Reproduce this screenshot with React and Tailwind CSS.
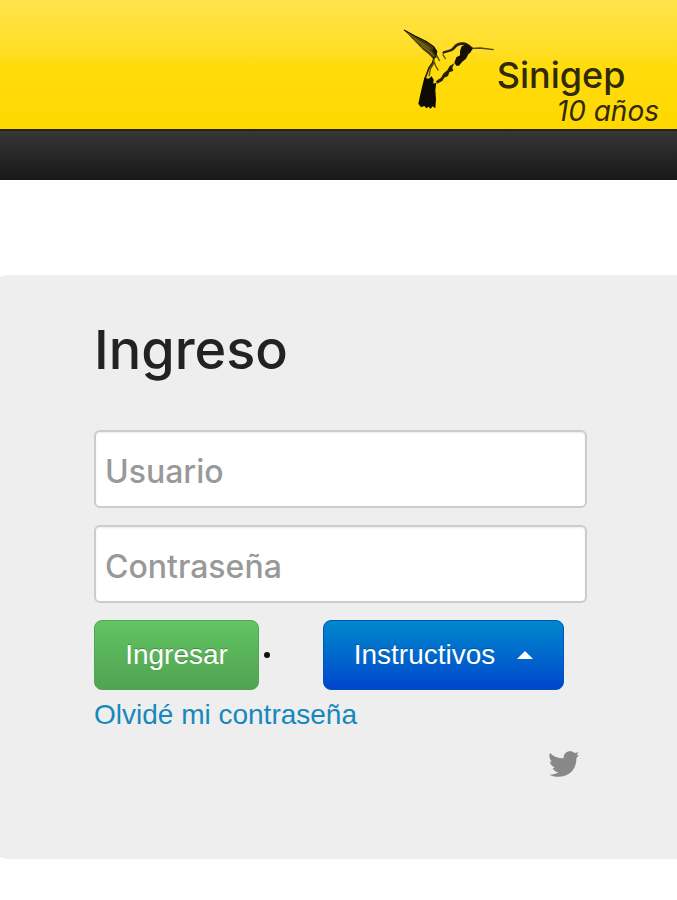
import { useState } from 'react'

function Hummingbird() {
  return (
    <svg viewBox="30 35 276 246" className="w-[92px] h-[82px] shrink-0" fill="none" aria-hidden="true">
      {/* Raised wing */}
      <path d="M33 41 L66 59 L100 76 L122 91 L131 105 L129 124 L120 127 L107 114 L90 100 L74 84 L55 64 Z" fill="#4a3d08" />
      <path d="M44 50 L80 76 L112 98 M62 68 L94 90 L118 112 M84 89 L108 104 L124 120" stroke="#a08a16" strokeWidth="2" />
      <path d="M33 41 L66 59 L100 76 L122 91 L131 105 L128 124" stroke="#1c1803" strokeWidth="4" />
      <path d="M122 93 L132 104 L128 116 L118 104 Z" fill="#16130a" />
      {/* Back, head and beak */}
      <path d="M148 108 C158 98 168 106 180 92 C188 79 208 73 224 82 C232 86 236 92 242 96 L234 104 L222 90 C208 83 196 86 188 95 C178 109 164 106 150 113 Z" fill="#2a2405" />
      <path d="M236 96 L262 95 L302 100" stroke="#51470a" strokeWidth="4" />
      {/* Throat and breast */}
      <path d="M206 90 L220 84 L238 96 L233 108 L226 114 L219 127 L207 137 L198 148 L190 148 L184 139 L190 123 L201 117 L201 104 Z" fill="#151205" />
      <path d="M184 141 L178 154 L181 163 L169 168 L165 179 L154 184 L148 194 L132 202 L129 194 L144 184 L152 171 L163 162 L170 149 Z" fill="#282106" />
      {/* Lower wing */}
      <path d="M124 121 L119 139 L108 155 L101 174 L96 187" stroke="#2a2405" strokeWidth="5" />
      <path d="M121 130 L128 149 L136 162 M124 138 L112 158 L108 180 M131 117 L140 134 M149 114 L158 128" stroke="#574b0b" strokeWidth="4" />
      {/* Tail */}
      <path d="M94 184 L107 187 L116 180 L122 190 L121 202 L130 199 L127 222 L129 248 L127 276 L119 270 L113 277 L106 271 L100 276 L94 269 L84 273 L76 262 L81 238 L88 208 Z" fill="#0d0b03" />
    </svg>
  )
}

function TwitterBird() {
  return (
    <svg viewBox="43 32 90 78" className="w-[30px] h-[26px]" fill="currentColor" aria-hidden="true">
      <path d="M46 38 C58 50 73 55 87 54 C86 42 95 33 106 33 C112 33 116 35 120 38 L132 36 L126 44 L132 45 L125 54 C126 80 110 108 75 109 C64 109 53 108 44 103 C56 103 65 101 71 96 C62 94 56 90 54 83 L61 82 C51 78 46 71 46 63 L53 65 C45 58 42 48 46 38 Z" />
    </svg>
  )
}

export default function App() {
  const [user, setUser] = useState('')
  const [password, setPassword] = useState('')

  const inputStyle =
    'block w-full h-[78px] px-[9px] pt-1 rounded-md border-2 border-[#cccccc] bg-white font-[Inter,sans-serif] text-[32px] font-medium text-[#444444] placeholder:text-[#999999] placeholder:opacity-100 shadow-[inset_0_1px_2px_rgba(0,0,0,0.08)] outline-none focus:border-[#52a8ec]'

  return (
    <div className="min-h-screen overflow-x-hidden bg-white font-['Liberation_Sans',Arial,sans-serif]">
      <header>
        <div className="flex justify-end h-[131px] pt-[28px] pr-[18px] bg-linear-to-b from-[#ffe34a] via-[#ffdc0c] via-50% to-[#ffd800] border-b-2 border-[#292504]">
          <Hummingbird />
          <div className="pt-[26px] pl-[2px] font-[Inter,sans-serif] text-[#30290a]">
            <p className="text-[36px] leading-[42px] font-medium">Sinigep</p>
            <p className="pl-[60px] text-[28px] leading-[30px] italic">10 años</p>
          </div>
        </div>
        <div className="h-[49px] bg-linear-to-b from-[#373737] to-[#181818]" />
      </header>

      <main className="mt-[95px] -ml-2 pl-[102px] pr-[90px] pt-[45px] pb-[82px] rounded-l-2xl bg-[#eeeeee]">
        <h1 className="mb-[50px] font-[Inter,sans-serif] text-[54px] leading-[60px] font-medium text-[#222222]">Ingreso</h1>
        <form onSubmit={(e) => e.preventDefault()}>
          <div className="space-y-[17px]">
            <input
              type="text"
              aria-label="Usuario"
              placeholder="Usuario"
              value={user}
              onChange={(e) => setUser(e.target.value)}
              className={inputStyle}
            />
            <input
              type="password"
              aria-label="Contraseña"
              placeholder="Contraseña"
              value={password}
              onChange={(e) => setPassword(e.target.value)}
              className={inputStyle}
            />
          </div>
          <div className="flex items-center mt-[17px]">
            <button
              type="submit"
              className="w-[165px] h-[70px] rounded-lg border border-[#51a351] bg-linear-to-b from-[#62c462] to-[#51a351] text-[28px] text-white [text-shadow:0_-1px_0_rgba(0,0,0,0.25)]"
            >
              Ingresar
            </button>
            <span className="ml-[5px] size-[6px] rounded-full bg-[#111111]" />
            <button
              type="button"
              aria-haspopup="menu"
              className="flex items-center justify-center gap-[22px] w-[241px] h-[70px] ml-[53px] rounded-lg border border-[#0055bb] bg-linear-to-b from-[#0088cc] to-[#0044cc] text-[28px] text-white [text-shadow:0_-1px_0_rgba(0,0,0,0.25)]"
            >
              Instructivos
              <span className="border-x-8 border-x-transparent border-b-8 border-b-white" />
            </button>
          </div>
          <a href="#" className="inline-block mt-[9px] text-[28px] leading-[32px] text-[#1688bd] hover:underline">
            Olvidé mi contraseña
          </a>
        </form>
        <div className="flex justify-end mt-[20px] pr-[8px]">
          <a href="#" aria-label="Twitter" className="text-[#888888]">
            <TwitterBird />
          </a>
        </div>
      </main>
    </div>
  )
}
